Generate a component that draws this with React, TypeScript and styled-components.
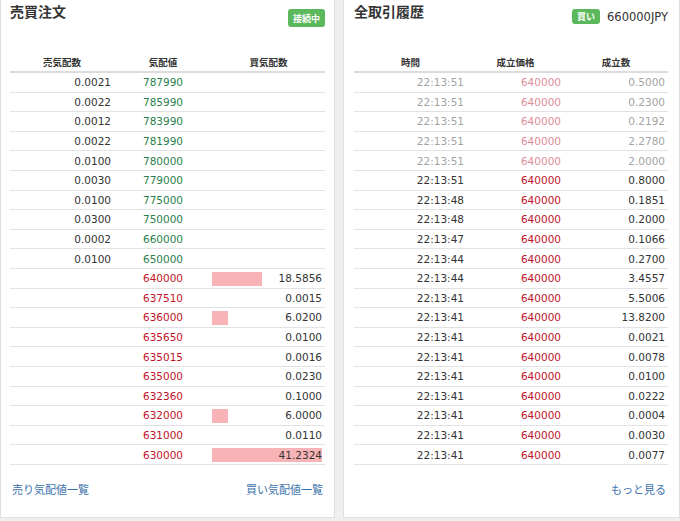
import styled, { createGlobalStyle } from "styled-components";

type Ask = { size: string; price: string };
type Bid = { price: string; size: string };
type Trade = { time: string; price: string; amount: string; old?: boolean };

const asks: Ask[] = [
  { size: "0.0021", price: "787990" },
  { size: "0.0022", price: "785990" },
  { size: "0.0012", price: "783990" },
  { size: "0.0022", price: "781990" },
  { size: "0.0100", price: "780000" },
  { size: "0.0030", price: "779000" },
  { size: "0.0100", price: "775000" },
  { size: "0.0300", price: "750000" },
  { size: "0.0002", price: "660000" },
  { size: "0.0100", price: "650000" },
];

const bids: Bid[] = [
  { price: "640000", size: "18.5856" },
  { price: "637510", size: "0.0015" },
  { price: "636000", size: "6.0200" },
  { price: "635650", size: "0.0100" },
  { price: "635015", size: "0.0016" },
  { price: "635000", size: "0.0230" },
  { price: "632360", size: "0.1000" },
  { price: "632000", size: "6.0000" },
  { price: "631000", size: "0.0110" },
  { price: "630000", size: "41.2324" },
];

const trades: Trade[] = [
  { time: "22:13:51", price: "640000", amount: "0.5000", old: true },
  { time: "22:13:51", price: "640000", amount: "0.2300", old: true },
  { time: "22:13:51", price: "640000", amount: "0.2192", old: true },
  { time: "22:13:51", price: "640000", amount: "2.2780", old: true },
  { time: "22:13:51", price: "640000", amount: "2.0000", old: true },
  { time: "22:13:51", price: "640000", amount: "0.8000" },
  { time: "22:13:48", price: "640000", amount: "0.1851" },
  { time: "22:13:48", price: "640000", amount: "0.2000" },
  { time: "22:13:47", price: "640000", amount: "0.1066" },
  { time: "22:13:44", price: "640000", amount: "0.2700" },
  { time: "22:13:44", price: "640000", amount: "3.4557" },
  { time: "22:13:41", price: "640000", amount: "5.5006" },
  { time: "22:13:41", price: "640000", amount: "13.8200" },
  { time: "22:13:41", price: "640000", amount: "0.0021" },
  { time: "22:13:41", price: "640000", amount: "0.0078" },
  { time: "22:13:41", price: "640000", amount: "0.0100" },
  { time: "22:13:41", price: "640000", amount: "0.0222" },
  { time: "22:13:41", price: "640000", amount: "0.0004" },
  { time: "22:13:41", price: "640000", amount: "0.0030" },
  { time: "22:13:41", price: "640000", amount: "0.0077" },
];

const BOOK_COLS = "104px 98px 1fr";
const TRADE_COLS = "113px 97px 1fr";
const BAR_MAX = 110;

const GlobalStyle = createGlobalStyle`
  body {
    margin: 0;
    background: #efefef;
    font-family: "DejaVu Sans", "Noto Sans CJK JP", sans-serif;
    color: #333;
  }
`;

const Page = styled.div`
  display: flex;
  gap: 8px;
  height: 518px;
`;

const Panel = styled.div<{ $w: number; $pr: number; $pl: number }>`
  width: ${(p) => p.$w}px;
  box-sizing: border-box;
  background: #fff;
  border: 1px solid #e0e0e0;
  border-top: none;
  padding: 0 ${(p) => p.$pr}px 0 ${(p) => p.$pl}px;
  display: flex;
  flex-direction: column;
`;

const PanelHead = styled.div`
  display: flex;
  justify-content: space-between;
  align-items: flex-start;
  height: 53px;
  padding-top: 2px;
  box-sizing: border-box;
`;

const Title = styled.h2`
  margin: 0;
  font-family: "Noto Sans CJK JP", sans-serif;
  font-size: 14px;
  font-weight: 700;
  line-height: 19px;
  color: #333;
`;

const Status = styled.div`
  display: flex;
  align-items: center;
  gap: 7px;
  margin-top: 7px;
`;

const Badge = styled.span<{ $h: number }>`
  display: inline-flex;
  align-items: center;
  height: ${(p) => p.$h}px;
  padding: 0 5px;
  background: #5cb85c;
  color: #fff;
  border-radius: 3px;
  font-family: "Noto Sans CJK JP", sans-serif;
  font-size: 9px;
  font-weight: 700;
`;

const Price = styled.span`
  font-size: 11.5px;
  color: #333;
`;

const HeadRow = styled.div<{ $cols: string }>`
  display: grid;
  grid-template-columns: ${(p) => p.$cols};
  height: 20px;
  align-items: center;
  border-bottom: 2px solid #dcdcdc;
  font-family: "Noto Sans CJK JP", sans-serif;
  font-size: 9.5px;
  font-weight: 700;
  color: #333;
  text-align: center;
  box-sizing: border-box;
`;

const Row = styled.div<{ $cols: string }>`
  display: grid;
  grid-template-columns: ${(p) => p.$cols};
  height: 19.6px;
  align-items: center;
  border-bottom: 1px solid #e2e2e2;
  font-size: 10.5px;
  box-sizing: border-box;
`;

const Cell = styled.div<{ $align?: string; $color?: string }>`
  position: relative;
  height: 100%;
  display: flex;
  align-items: center;
  justify-content: ${(p) =>
    p.$align === "center" ? "center" : p.$align === "left" ? "flex-start" : "flex-end"};
  padding-right: ${(p) => (p.$align === "center" ? 0 : 3)}px;
  color: ${(p) => p.$color || "#333"};
`;

const Bar = styled.div`
  position: absolute;
  left: 0;
  top: 3px;
  bottom: 2px;
  background: #f8b3b6;
`;

const Num = styled.span`
  position: relative;
`;

const Footer = styled.div`
  display: flex;
  justify-content: space-between;
  padding: 16px 2px 0 2px;
  font-family: "Noto Sans CJK JP", sans-serif;
  font-size: 11px;
  color: #3d72ab;
`;

const GREEN = "#2b7f4c";
const RED = "#bf1329";

const OrderBook = () => {
  const max = Math.max(...bids.map((b) => parseFloat(b.size)));
  return (
    <Panel $w={335} $pl={9} $pr={9}>
      <PanelHead>
        <Title>売買注文</Title>
        <Status>
          <Badge $h={18}>接続中</Badge>
        </Status>
      </PanelHead>
      <HeadRow $cols={BOOK_COLS}>
        <span>売気配数</span>
        <span>気配値</span>
        <span>買気配数</span>
      </HeadRow>
      {asks.map((a, i) => (
        <Row key={"a" + i} $cols={BOOK_COLS}>
          <Cell>{a.size}</Cell>
          <Cell $align="center" $color={GREEN}>{a.price}</Cell>
          <Cell />
        </Row>
      ))}
      {bids.map((b, i) => {
        const v = parseFloat(b.size);
        return (
          <Row key={"b" + i} $cols={BOOK_COLS}>
            <Cell />
            <Cell $align="center" $color={RED}>{b.price}</Cell>
            <Cell>
              {v >= 1 && <Bar style={{ width: Math.round((v / max) * BAR_MAX) }} />}
              <Num>{b.size}</Num>
            </Cell>
          </Row>
        );
      })}
      <Footer>
        <span>売り気配値一覧</span>
        <span>買い気配値一覧</span>
      </Footer>
    </Panel>
  );
};

const TradeHistory = () => (
  <Panel $w={337} $pl={10} $pr={11}>
    <PanelHead>
      <Title>全取引履歴</Title>
      <Status>
        <Badge $h={15}>買い</Badge>
        <Price>660000JPY</Price>
      </Status>
    </PanelHead>
    <HeadRow $cols={TRADE_COLS}>
      <span>時間</span>
      <span>成立価格</span>
      <span>成立数</span>
    </HeadRow>
    {trades.map((t, i) => (
      <Row key={i} $cols={TRADE_COLS}>
        <Cell $color={t.old ? "#a3a3a3" : "#333"}>{t.time}</Cell>
        <Cell $color={t.old ? "#dc8e98" : RED}>{t.price}</Cell>
        <Cell $color={t.old ? "#a3a3a3" : "#333"}>{t.amount}</Cell>
      </Row>
    ))}
    <Footer>
      <span />
      <span>もっと見る</span>
    </Footer>
  </Panel>
);

export default function App() {
  return (
    <>
      <GlobalStyle />
      <Page>
        <OrderBook />
        <TradeHistory />
      </Page>
    </>
  );
}
